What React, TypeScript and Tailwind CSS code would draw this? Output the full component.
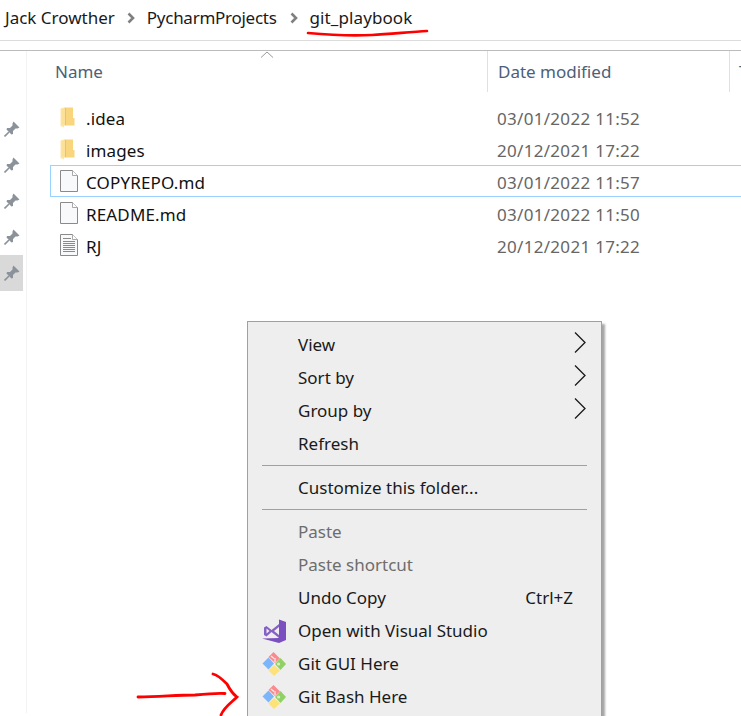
const font = "font-['Noto_Sans',sans-serif]"

function Chevron({ className }: { className: string }) {
  return (
    <svg width="8" height="12" viewBox="0 0 8 12" className={className}>
      <path d="M1.5 1.5 L6 6 L1.5 10.5" fill="none" stroke="#808080" strokeWidth="2.6" />
    </svg>
  )
}

function Pin() {
  return (
    <svg width="16" height="16" viewBox="0 0 16 16">
      <path d="M9.5 0.5 L15.5 6.5 L13.5 7.5 L11.5 7.5 L9 10 L9 13 L7.5 13.5 L2.5 8.5 L3 7 L6 7 L8.5 4.5 L8.5 2.5 Z" fill="#8c9299" />
      <path d="M5 11 L0.5 15.5" stroke="#8c9299" strokeWidth="1.6" />
    </svg>
  )
}

function FolderIcon() {
  return (
    <svg width="15" height="21" viewBox="0 0 15 21" className="mr-[2px]">
      <path d="M4 0.5 H13 V11 H14.5 V18.5 H4 Z" fill="#f9d67e" />
      <path d="M0.5 1.5 L4 0.5 V18.5 L4 20.5 L0.5 19 Z" fill="#fde7ac" />
      <path d="M1.5 2 L5 1 V18 H1.5 Z" fill="#fbe09a" />
      <path d="M5 1 H6 V18 H5 Z" fill="#eec262" />
    </svg>
  )
}

function FileIcon({ lines = false }: { lines?: boolean }) {
  return (
    <svg width="18" height="22" viewBox="0 0 18 22">
      <path d="M0.5 0.5 H12.5 L17.5 5.5 V21.5 H0.5 Z" fill="#f8f9fa" stroke="#8a8a8a" />
      <path d="M12.5 0.5 V5.5 H17.5" fill="#fff" stroke="#a8a8a8" />
      {lines && (
        <path d="M3 4.5 H11 M3 7.5 H15 M3 9.5 H15 M3 11.5 H15 M3 13.5 H15 M3 15.5 H15 M3 17.5 H15" stroke="#8a8a8a" strokeWidth="1" />
      )}
    </svg>
  )
}

function VsIcon() {
  return (
    <svg width="24" height="24" viewBox="0 0 24 24">
      <path d="M17 0.5 L24 3 V21 L17 24 L0 19.5 L17 19 Z" fill="#7b4fc0" />
      <path d="M17 5 L9.5 11 L4.5 7 L2 8.5 V16 L4.5 17.5 L9.5 13 L17 19 Z" fill="#8661c5" />
      <path d="M4.5 9.5 V14.5 L7.5 12 Z M17 8 L12 12 L17 16 Z" fill="#eeeeee" />
    </svg>
  )
}

function GitIcon() {
  return (
    <svg width="24" height="24" viewBox="0 0 24 24">
      <path d="M6.5 5.5 L12 11.5 L6.5 17.5 L0.5 11.5 Z" fill="#7db5fb" />
      <path d="M11.5 0 L18 6.5 L13 11 L6.5 5 Z" fill="#fb8a8e" />
      <path d="M13 10 L13 6 M9 4 L12 6.5" stroke="#eeeeee" strokeWidth="1.2" />
      <path d="M18.5 6 L24 12 L18.5 18 L13 12 Z" fill="#8fd163" />
      <path d="M15 12 A1.6 1.6 0 1 0 18.2 12 A1.6 1.6 0 1 0 15 12" fill="#d8f0c4" />
      <path d="M12 13 L18 18.5 L12 24 L6.5 18.5 Z" fill="#fde27a" />
    </svg>
  )
}

const files = [
  { name: '.idea', date: '03/01/2022 11:52', icon: <FolderIcon /> },
  { name: 'images', date: '20/12/2021 17:22', icon: <FolderIcon /> },
  { name: 'COPYREPO.md', date: '03/01/2022 11:57', icon: <FileIcon />, focused: true },
  { name: 'README.md', date: '03/01/2022 11:50', icon: <FileIcon /> },
  { name: 'RJ', date: '20/12/2021 17:22', icon: <FileIcon lines />, type: 'Text Document' },
]

function MenuRow({ label, icon, hasSub, disabled, shortcut }: { label: string; icon?: React.ReactNode; hasSub?: boolean; disabled?: boolean; shortcut?: string }) {
  return (
    <div className={`h-[33px] flex items-center ${disabled ? 'text-[#6d6d6d]' : 'text-[#1a1a1a]'}`}>
      <div className="w-[50px] flex justify-center pl-[2px]">{icon}</div>
      <span className="flex-1 whitespace-nowrap">{label}</span>
      {shortcut && <span className="mr-[28px]">{shortcut}</span>}
      {hasSub && (
        <svg width="12" height="21" viewBox="0 0 12 21" className="mr-[15px] mb-[4px]">
          <path d="M1 0.5 L11 10.5 L1 20.5" fill="none" stroke="#1a1a1a" strokeWidth="1.3" />
        </svg>
      )}
    </div>
  )
}

function MenuSeparator() {
  return <div className="h-px bg-[#a0a0a0] mx-[14px] my-[5px]" />
}

export default function App() {
  return (
    <div className={`${font} relative w-[741px] h-[716px] overflow-hidden bg-white text-[17px] leading-none`}>
      {/* Breadcrumb */}
      <div className="h-[41px] flex items-center pl-[5px] pb-[5px] border-b border-[#dcdcdc] text-[#1a1a1a]">
        <span>Jack Crowther</span>
        <Chevron className="mx-[12px]" />
        <span className="tracking-[-0.27px]">PycharmProjects</span>
        <Chevron className="ml-[13px] mr-[12px]" />
        <span className="tracking-[0.1px]">git_playbook</span>
      </div>
      <div className="h-[10px] border-b border-[#bcbcbc]" />

      <div className="flex h-[662px]">
        {/* Quick access pins */}
        <div className="w-[27px] shrink-0 border-r border-[#f3f3f3] pt-[60px] pr-[3px]">
          {[0, 1, 2, 3, 4].map((i) => (
            <div key={i} className={`h-[36px] flex items-center justify-center ${i === 4 ? 'bg-[#d9d9d9]' : ''}`}>
              <Pin />
            </div>
          ))}
        </div>

        {/* File list */}
        <div className="flex-1 overflow-hidden">
          <div className="relative flex h-[41px] text-[#4c607a]">
            <div className="w-[460px] shrink-0 pl-[28px] flex items-center">Name</div>
            <div className="w-[243px] shrink-0 pl-[10px] flex items-center border-l border-[#e0e0e0] border-r">Date modified</div>
            <div className="pl-[9px] flex items-center whitespace-nowrap">Type</div>
            <svg width="14" height="8" viewBox="0 0 14 8" className="absolute left-[233px] top-0">
              <path d="M1 6.5 L7 1 L13 6.5" fill="none" stroke="#9a9a9a" strokeWidth="1" />
            </svg>
          </div>
          <div className="pt-[9px] pl-[23px]">
            {files.map((f) => (
              <div key={f.name} className={`flex h-[32px] items-center whitespace-nowrap ${f.focused ? 'border border-r-0 border-[#99d1ff]' : 'border border-transparent'}`}>
                <div className="w-[35px] flex justify-center shrink-0">{f.icon}</div>
                <div className="w-[411px] shrink-0 pt-[2px] tracking-[0.15px] text-[#111]">{f.name}</div>
                <div className="w-[244px] shrink-0 pt-[2px] tracking-[0.3px] text-[#666]">{f.date}</div>
                <div className="pt-[2px] text-[#666]">{f.type}</div>
              </div>
            ))}
          </div>
        </div>
      </div>

      {/* Context menu */}
      <div className="absolute left-[247px] top-[321px] w-[355px] h-[400px] bg-[#eeeeee] border border-[#a0a0a0] shadow-[3px_3px_2px_rgba(0,0,0,0.35)] pt-[6px]">
        <MenuRow label="View" hasSub />
        <MenuRow label="Sort by" hasSub />
        <MenuRow label="Group by" hasSub />
        <MenuRow label="Refresh" />
        <MenuSeparator />
        <MenuRow label="Customize this folder..." />
        <MenuSeparator />
        <MenuRow label="Paste" disabled />
        <MenuRow label="Paste shortcut" disabled />
        <MenuRow label="Undo Copy" shortcut="Ctrl+Z" />
        <MenuRow label="Open with Visual Studio" icon={<VsIcon />} />
        <MenuRow label="Git GUI Here" icon={<GitIcon />} />
        <MenuRow label="Git Bash Here" icon={<GitIcon />} />
      </div>

      {/* Red annotations */}
      <svg width="741" height="716" viewBox="0 0 741 716" className="absolute left-0 top-0 pointer-events-none">
        <path d="M308 33 C330 35 350 36 372 35 C390 34 410 32 427 31" fill="none" stroke="#f00" strokeWidth="2.6" strokeLinecap="round" />
        <path d="M138 697 C160 697 175 695 195 695 C205 694 217 693 225 693.5" fill="none" stroke="#f00" strokeWidth="2.8" strokeLinecap="round" />
        <path d="M213 674 C218 675 223 680 227 684 C230 690 233 694 237 697 C232 702 224 707 221 715" fill="none" stroke="#f00" strokeWidth="2.8" strokeLinecap="round" />
      </svg>
    </div>
  )
}
